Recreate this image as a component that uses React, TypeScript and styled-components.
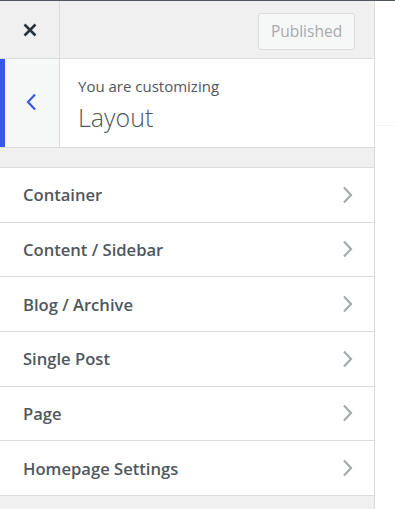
import React from "react";
import styled, { createGlobalStyle } from "styled-components";

const Global = createGlobalStyle`
  html, body { margin: 0; padding: 0; background: #fff; }
  body { font-family: "Open Sans", "Noto Sans", sans-serif; -webkit-font-smoothing: antialiased; }
  * { box-sizing: border-box; }
`;

const Page = styled.div`
  display: flex;
  width: 395px;
  height: 509px;
  border-top: 1px solid #50575e;
  overflow: hidden;
`;

const Sidebar = styled.aside`
  width: 375px;
  flex: none;
  display: flex;
  flex-direction: column;
  background: #f0f0f1;
  border-right: 1px solid #dcdcde;
`;

const Preview = styled.div`
  flex: 1;
  background: #fff;
  padding-top: 124px;
`;

const PreviewLine = styled.div`
  height: 1px;
  background: #f3f3f4;
`;

const Header = styled.header`
  display: flex;
  align-items: center;
  height: 58px;
  border-bottom: 1px solid #dcdcde;
  background: #f0f0f1;
`;

const CloseButton = styled.button`
  width: 60px;
  height: 100%;
  display: flex;
  align-items: center;
  justify-content: center;
  border: 0;
  border-right: 1px solid #dcdcde;
  background: transparent;
  padding: 0;
  color: #2c3338;
`;

const Spacer = styled.div`
  flex: 1;
`;

const PublishButton = styled.button`
  margin-right: 19px;
  margin-top: 3px;
  height: 37px;
  width: 97px;
  border: 1px solid #dcdcde;
  border-radius: 3px;
  background: #f6f7f7;
  color: #a7aaad;
  font-family: inherit;
  font-size: 15.5px;
  padding: 0 0 1px;
`;

const SectionHead = styled.div`
  display: flex;
  height: 89px;
  background: #fff;
  border-bottom: 1px solid #dcdcde;
`;

const BackButton = styled.button`
  width: 60px;
  flex: none;
  display: flex;
  align-items: center;
  justify-content: center;
  border: 0;
  border-left: 5px solid #3858e9;
  border-right: 1px solid #dcdcde;
  background: #f6f7f7;
  padding: 0 0 2px;
`;

const TitleBlock = styled.div`
  display: flex;
  flex-direction: column;
  padding: 16px 0 0 18px;
  color: #50575e;
`;

const Kicker = styled.span`
  font-size: 15px;
  line-height: 22px;
`;

const Title = styled.h2`
  margin: 4px 0 0;
  font-size: 25px;
  font-weight: 300;
  line-height: 32px;
`;

const Gap = styled.div`
  height: 19px;
`;

const List = styled.ul`
  list-style: none;
  margin: 0;
  padding: 0;
  background: #fff;
  border-top: 1px solid #dcdcde;
`;

const Item = styled.li`
  display: flex;
  align-items: center;
  justify-content: space-between;
  height: 54.67px;
  padding: 0 20px 0 23px;
  border-bottom: 1px solid #dcdcde;
  font-size: 16.6px;
  font-weight: 600;
  color: #50575e;
`;

const Chevron = ({ dir, color }: { dir: "left" | "right"; color: string }) => (
  <svg width="14" height="18" viewBox="0 0 14 18" fill="none">
    <path
      d={dir === "left" ? "M10 1.5 L3 9 L10 16.5" : "M4 1.5 L11 9 L4 16.5"}
      stroke={color}
      strokeWidth="2.2"
    />
  </svg>
);

const items = ["Container", "Content / Sidebar", "Blog / Archive", "Single Post", "Page", "Homepage Settings"];

export default function App() {
  return (
    <>
      <Global />
      <Page>
        <Sidebar>
          <Header>
            <CloseButton aria-label="Close">
              <svg width="14" height="14" viewBox="0 0 14 14">
                <path d="M1.5 1.5 L12.5 12.5 M12.5 1.5 L1.5 12.5" stroke="#2c3338" strokeWidth="2.6" />
              </svg>
            </CloseButton>
            <Spacer />
            <PublishButton>Published</PublishButton>
          </Header>
          <SectionHead>
            <BackButton aria-label="Back">
              <Chevron dir="left" color="#3858e9" />
            </BackButton>
            <TitleBlock>
              <Kicker>You are customizing</Kicker>
              <Title>Layout</Title>
            </TitleBlock>
          </SectionHead>
          <Gap />
          <List>
            {items.map((t) => (
              <Item key={t}>
                {t}
                <Chevron dir="right" color="#a7aaad" />
              </Item>
            ))}
          </List>
        </Sidebar>
        <Preview>
          <PreviewLine />
        </Preview>
      </Page>
    </>
  );
}
